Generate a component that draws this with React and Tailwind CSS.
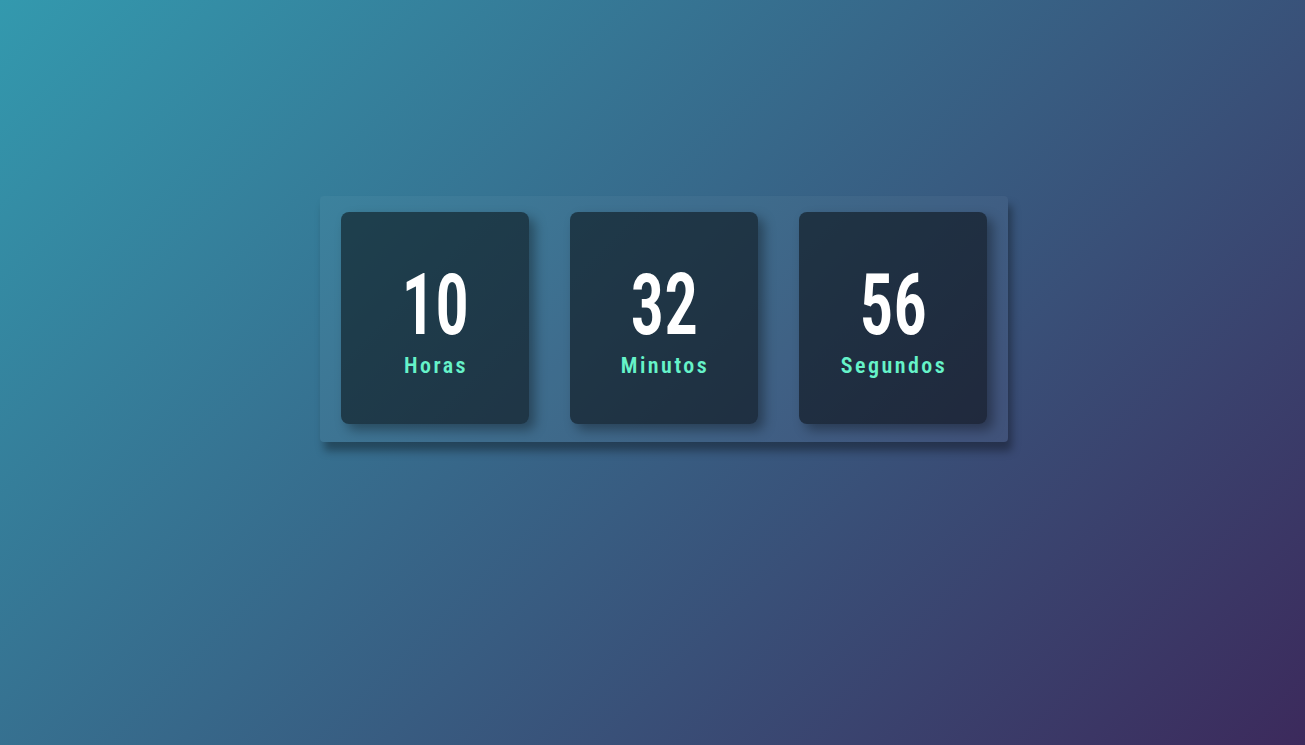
const units = [
  { value: '10', label: 'Horas' },
  { value: '32', label: 'Minutos' },
  { value: '56', label: 'Segundos' },
]

function TimeCard({ value, label }) {
  return (
    <div className="w-[188px] h-[212px] rounded-lg bg-black/50 shadow-[6px_6px_12px_rgba(0,0,0,0.35)] flex flex-col items-center justify-center pt-[5px]">
      <span className="text-[86px] leading-none font-semibold text-white scale-x-[0.78]">
        {value}
      </span>
      <span className="mt-1 text-[22px] leading-[28px] font-semibold tracking-[2.5px] text-[#66f3c9] pl-[2px]">
        {label}
      </span>
    </div>
  )
}

export default function App() {
  return (
    <div
      className="min-h-screen bg-[linear-gradient(135deg,#3399ae,#3c2a5c)] pt-[196px] pl-[320px]"
      style={{ fontFamily: '"Roboto Condensed", Roboto, sans-serif' }}
    >
      <div className="w-[688px] rounded-sm bg-white/[0.04] shadow-[4px_9px_8px_rgba(0,0,0,0.35)] flex gap-[41px] px-[21px] pt-4 pb-[18px]">
        {units.map((u) => (
          <TimeCard key={u.label} value={u.value} label={u.label} />
        ))}
      </div>
    </div>
  )
}
